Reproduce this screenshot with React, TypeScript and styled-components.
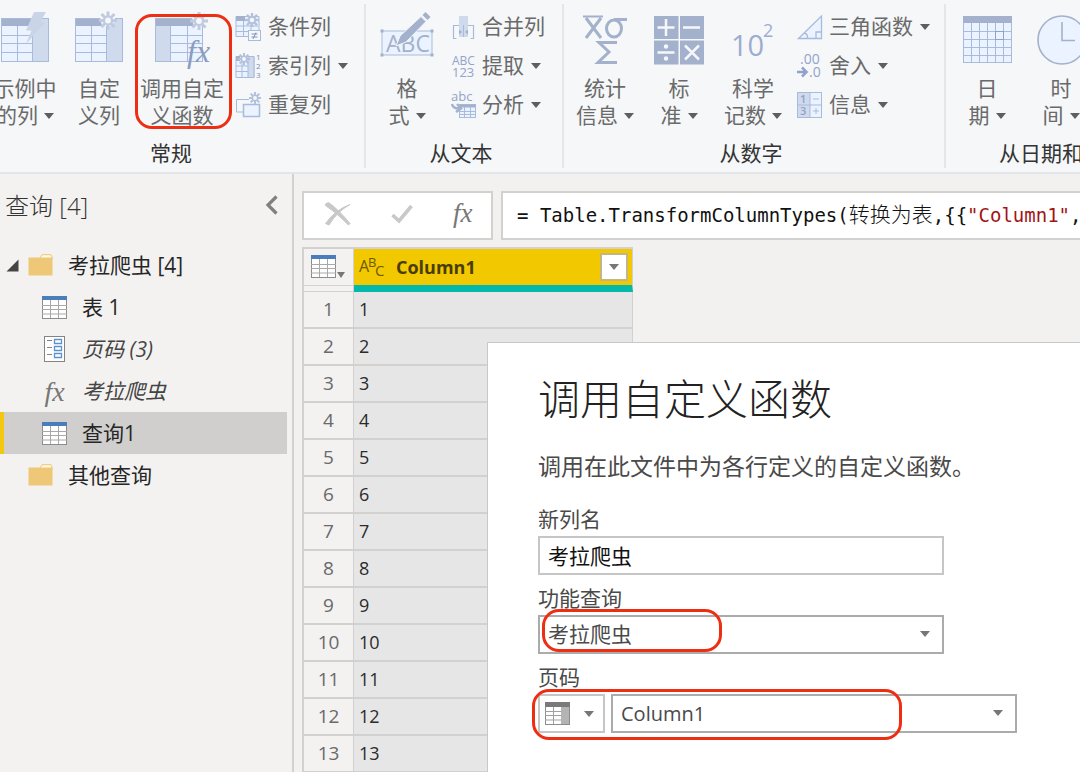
import React from "react";
import styled, { createGlobalStyle } from "styled-components";

const SANS = `"Open Sans", "Noto Sans CJK SC", sans-serif`;
const MONO = `"DejaVu Sans Mono", "Noto Sans CJK SC", monospace`;
const SERIF = `"Liberation Serif", serif`;

const GlobalStyle = createGlobalStyle`
  *, *::before, *::after { box-sizing: border-box; }
  body { margin: 0; font-family: ${SANS}; background: #f3f2f1; }
  button, input, select { font: inherit; color: inherit; border-radius: 0; margin: 0; }
  button { background: none; border: 0; padding: 0; cursor: pointer; }
`;

const Page = styled.div`
  display: flex;
  flex-direction: column;
  height: 100vh;
  overflow: hidden;
  font-size: 21px;
  line-height: 27px;
  color: #333;
`;

/* ---------- Ribbon ---------- */

const RibbonFrame = styled.header`
  flex: none;
  overflow: hidden;
  background: #f5f7f9;
  border-bottom: 2px solid #e3e6e9;
`;

const RibbonStrip = styled.div`
  display: flex;
  width: max-content;
  margin-left: -22px;
  padding: 4px 0;
`;

const Group = styled.section<{ $width: number; $start?: number }>`
  display: flex;
  flex-direction: column;
  flex: none;
  width: ${(p) => p.$width}px;
  padding-left: ${(p) => p.$start ?? 4}px;
  border-right: 2px solid #e4e6ea;
`;

const GroupBody = styled.div`
  display: flex;
  height: 135px;
`;

const GroupName = styled.h2`
  margin: 0 0 1px;
  padding-right: 10px;
  font-size: 21px;
  font-weight: 400;
  line-height: 28px;
  text-align: center;
  color: #333;
`;

const BigButton = styled.button<{ $wide?: boolean }>`
  position: relative;
  display: flex;
  flex-direction: column;
  align-items: center;
  flex: none;
  width: ${(p) => (p.$wide ? 92 : 74)}px;
  padding-top: 7px;
  color: #6a6a6a;
  white-space: nowrap;
`;

const BigIcon = styled.span`
  display: flex;
  align-items: flex-start;
  justify-content: center;
  height: 64px;
  svg { display: block; }
`;

const CaptionLine = styled.span`
  display: flex;
  align-items: center;
  gap: 6px;
  height: 27px;
`;

const SmallList = styled.div`
  display: flex;
  flex-direction: column;
  margin-left: 7px;
  padding-top: 3px;
`;

const SmallButton = styled.button`
  display: flex;
  align-items: center;
  gap: 6px;
  height: 39px;
  color: #6a6a6a;
  white-space: nowrap;
  svg { flex: none; }
`;

const SmallLabel = styled.span`
  margin-right: 1px;
`;

const Ring = styled.span<{ $inset: string }>`
  position: absolute;
  inset: ${(p) => p.$inset};
  border: 3px solid #ee2e12;
  border-radius: 17px;
  pointer-events: none;
`;

/* ---------- Query pane ---------- */

const Body = styled.div`
  display: flex;
  flex: 1;
  min-height: 0;
`;

const Pane = styled.aside`
  flex: none;
  width: 294px;
  border-right: 2px solid #d2d1d0;
  background: #f3f2f1;
`;

const PaneHeader = styled.div`
  display: flex;
  align-items: center;
  justify-content: space-between;
  height: 62px;
  padding: 0 14px 0 5px;
  margin-bottom: 8px;
`;

const PaneTitle = styled.h1`
  margin: 0;
  font-size: 24px;
  font-weight: 300;
  color: #333;
`;

const CollapseButton = styled.button`
  display: flex;
`;

const Tree = styled.ul`
  margin: 0;
  padding: 0;
  list-style: none;
`;

const TreeButton = styled.button<{ $depth: number; $selected?: boolean; $italic?: boolean }>`
  display: flex;
  align-items: center;
  width: 287px;
  height: 42px;
  padding-left: ${(p) => (p.$depth ? 38 : 2)}px;
  border-left: 4px solid ${(p) => (p.$selected ? "#f2c811" : "transparent")};
  background: ${(p) => (p.$selected ? "#d0cfce" : "transparent")};
  font-style: ${(p) => (p.$italic ? "italic" : "normal")};
  color: ${(p) => (p.$italic ? "#444" : "#262626")};
  text-align: left;
`;

const Twisty = styled.span`
  display: flex;
  width: 22px;
`;

const TreeIcon = styled.span`
  display: flex;
  align-items: center;
  justify-content: center;
  width: 25px;
  margin-right: 15px;
`;

const Fx = styled.span<{ $size: number }>`
  font-family: ${SERIF};
  font-size: ${(p) => p.$size}px;
  font-style: italic;
  line-height: 27px;
  color: #777;
`;

/* ---------- Workspace ---------- */

const Workspace = styled.main`
  position: relative;
  flex: 1;
  min-width: 0;
  padding: 17px 0 0 8px;
  overflow: hidden;
  background: #f2f1f0;
`;

const FormulaRow = styled.div`
  display: flex;
  gap: 8px;
  height: 49px;
  margin-bottom: 7px;
`;

const FormulaActions = styled.div`
  display: flex;
  align-items: center;
  gap: 40px;
  flex: none;
  width: 191px;
  padding: 0 0 4px 21px;
  border: 2px solid #d2d1d0;
  background: #fff;
`;

const ActionButton = styled.button`
  display: flex;
  align-items: center;
  justify-content: center;
  height: 36px;
`;

const Formula = styled.code`
  flex: 1;
  min-width: 0;
  padding: 0 14px;
  border: 2px solid #d2d1d0;
  border-right: 0;
  overflow: hidden;
  background: #fff;
  font-family: ${MONO};
  font-size: 19px;
  line-height: 44px;
  white-space: pre;
  color: #111;
`;

const FormulaName = styled.span`
  font-size: 21px;
  font-weight: 300;
`;

const FormulaString = styled.span`
  color: #a31515;
`;

const Grid = styled.table`
  width: 331px;
  border-collapse: separate;
  border-spacing: 0;
  table-layout: fixed;
  border-top: 2px solid #d2d1d0;
  border-left: 2px solid #d2d1d0;
`;

const CornerCell = styled.th`
  width: 50px;
  height: 43px;
  padding: 0;
  border-right: 1px solid #d2d1d0;
  border-bottom: 1px solid #d2d1d0;
  background: #f3f2f1;
`;

const CornerButton = styled.button`
  display: flex;
  align-items: flex-end;
  gap: 1px;
  width: 100%;
  height: 36px;
  padding: 0 0 7px 7px;
  margin-bottom: 4px;
  border-bottom: 1px solid #d2d1d0;
`;

const ColumnCell = styled.th`
  height: 43px;
  padding: 0;
  border-right: 1px solid #d2d1d0;
  border-bottom: 7px solid #01b8aa;
  background: #f2c800;
  font-weight: 400;
`;

const ColumnHead = styled.div`
  display: flex;
  align-items: center;
  height: 36px;
  padding: 0 4px 0 5px;
`;

const ColumnName = styled.span`
  flex: 1;
  margin-left: 11px;
  font-size: 18px;
  font-weight: 700;
  text-align: left;
  color: #4a3d00;
`;

const FilterButton = styled.button`
  display: flex;
  align-items: center;
  justify-content: center;
  width: 28px;
  height: 28px;
  border: 2px solid #c4b682;
  background: #fff;
`;

const RowNumber = styled.th`
  height: 37px;
  padding: 0;
  border-right: 1px solid #d2d1d0;
  border-bottom: 2px solid #d2d1d0;
  background: #f3f2f1;
  font-size: 19px;
  font-weight: 400;
  text-align: center;
  color: #6a6a6a;
`;

const ValueCell = styled.td`
  height: 37px;
  padding: 0 0 0 5px;
  border-right: 1px solid #d2d1d0;
  border-bottom: 2px solid #d2d1d0;
  background: #e6e6e6;
  font-size: 18px;
  font-weight: 500;
  color: #2b2b2b;
`;

/* ---------- Dialog ---------- */

const Dialog = styled.section`
  position: absolute;
  top: 168px;
  right: 0;
  bottom: 0;
  left: 193px;
  padding: 28px 50px;
  border-top: 1px solid #c8c8c8;
  border-left: 1px solid #c8c8c8;
  background: #fff;
  color: #4a4a4a;
`;

const DialogTitle = styled.h2`
  margin: 0;
  font-size: 42px;
  font-weight: 300;
  line-height: 56px;
  white-space: nowrap;
  color: #222;
`;

const DialogText = styled.p`
  margin: 23px 0 24px;
  font-size: 23px;
  line-height: 32px;
  white-space: nowrap;
`;

const Field = styled.div`
  margin-bottom: 10px;
`;

const FieldLabel = styled.label`
  display: block;
  height: 30px;
`;

const ControlRow = styled.div`
  position: relative;
  display: flex;
  gap: 6px;
`;

const TextInput = styled.input`
  width: 406px;
  height: 39px;
  padding: 0 8px 2px;
  border: 2px solid #c6c6c6;
  background: #fff;
  color: #111;
  outline: 0;
`;

const SelectFrame = styled.div`
  position: relative;
  width: 406px;
  height: 39px;
  svg { position: absolute; right: 14px; top: 16px; pointer-events: none; }
`;

const Select = styled.select<{ $latin?: boolean }>`
  appearance: none;
  width: 100%;
  height: 100%;
  padding: 0 32px 0 8px;
  border: 2px solid #ababab;
  background: #fff;
  font-size: ${(p) => (p.$latin ? 20 : 21)}px;
  color: #4a4a4a;
`;

const TypePicker = styled.button`
  display: flex;
  align-items: center;
  justify-content: space-between;
  width: 67px;
  height: 39px;
  padding: 0 9px 0 5px;
  border: 2px solid #c6c6c6;
`;

const RingSpan = styled.span<{ $width: number }>`
  display: block;
  width: ${(p) => p.$width}px;
`;

/* ---------- Icons ---------- */

const LINE = "#a9bbdc";
const HEAD = "#a3b1cc";
const CELL = "#eaf3ff";
const SIDE = "#cfdaec";

const Caret = ({ color = "#5e5e5e", w = 10 }: { color?: string; w?: number }) => (
  <svg width={w} height={6} viewBox="0 0 10 6" preserveAspectRatio="none">
    <path d="M0 0h10L5 6z" fill={color} />
  </svg>
);

const Spark = ({ x, y, r, color = "#c0cbe0" }: { x: number; y: number; r: number; color?: string }) => (
  <g transform={`translate(${x} ${y}) scale(${r / 9})`} stroke={color} strokeWidth="3" fill="none">
    <path d="M0 -9V-4M0 9V4M-9 0H-4M9 0H4M-6.500 -6.500L-3 -3M6.500 6.500L3 3M-6.500 6.500L-3 3M6.500 -6.500L3 -3" />
    <circle r="4" fill="#f5f7f9" strokeWidth="2.2" />
  </g>
);

const BigTable = ({ side }: { side: "left" | "right" }) => {
  const sx = side === "left" ? 1 : 33;
  const cx = side === "left" ? 17 : 1;
  return (
    <g>
      <rect x="1" y="7" width="48" height="43" fill={CELL} />
      <rect x={sx} y="7" width="16" height="43" fill={SIDE} />
      <path d={`M${cx} 24.500h32M${cx} 32.500h32M${cx} 41.500h32M${cx + 16}.500 15v35`} stroke={LINE} fill="none" />
      {side === "right" && <rect x="33" y="15" width="16" height="35" fill={SIDE} />}
      <path d={side === "left" ? "M16.500 15v35" : "M32.500 15v35"} stroke={LINE} fill="none" />
      <rect x="1" y="7" width={side === "left" ? 48 : 32} height="8" fill={HEAD} />
      <rect x="1.500" y="7.500" width="47" height="43" fill="none" stroke={LINE} />
    </g>
  );
};

const ExampleColumnIcon = () => (
  <svg width="50" height="54" viewBox="0 0 50 54">
    <BigTable side="right" />
    <path d="M34 1H46L40 11.500H45L26 33L31.500 19.500H26z" fill="#c9d4e6" />
  </svg>
);

const CustomColumnIcon = () => (
  <svg width="50" height="54" viewBox="0 0 50 54">
    <BigTable side="right" />
    <path d="M26 6h15v4l-5 5h-8z" fill="#f5f7f9" />
    <Spark x={34} y={9.5} r={9} />
  </svg>
);

const InvokeIcon = () => (
  <svg width="56" height="60" viewBox="0 0 56 60">
    <BigTable side="left" />
    <path d="M38 6h12v6l-5 5h-5z" fill="#f5f7f9" />
    <Spark x={45} y={10} r={9} />
    <text x="33" y="51" fontFamily={SERIF} fontStyle="italic" fontSize="32" fill="#8c9cc0">fx</text>
  </svg>
);

const ConditionalIcon = () => (
  <svg width="27" height="28" viewBox="0 0 27 28">
    <path d="M1 3.500h23v20H1z" fill={CELL} stroke={LINE} />
    <path d="M1 3h9v5H1z" fill={HEAD} />
    <path d="M1 13h22M1 18.500h22M8.500 8v15M16 8v15" stroke={LINE} />
    <Spark x={17} y={7} r={7} color="#b3c1dc" />
    <rect x="13.500" y="17.500" width="12" height="10" fill="#f5f7f9" stroke={LINE} />
    <path d="M16.500 21h6M16.500 24h6M21 19.500l-3 6.500" stroke="#7f92bd" />
  </svg>
);

const IndexIcon = () => (
  <svg width="27" height="28" viewBox="0 0 27 28">
    <path d="M1 4.500h18v21H1z" fill={CELL} stroke={LINE} />
    <path d="M13 4.500h6v21h-6z" fill={SIDE} stroke={LINE} />
    <path d="M1 4h4v5H1z" fill={HEAD} />
    <path d="M1 14h12M1 19.500h12M7 10v15" stroke={LINE} />
    <Spark x={9} y={7} r={6} color="#b3c1dc" />
    <g fontFamily={SANS} fontSize="8" fill="#7c8db8">
      <text x="21" y="8">1</text>
      <text x="21" y="17">2</text>
      <text x="21" y="26">3</text>
    </g>
  </svg>
);

const DuplicateIcon = () => (
  <svg width="27" height="28" viewBox="0 0 27 28">
    <path d="M8 21H1.500V8.500H14" fill="none" stroke={LINE} />
    <rect x="8.500" y="13.500" width="16" height="12" fill={CELL} stroke={LINE} strokeWidth="1.500" />
    <Spark x={20} y={7} r={6} color="#b3c1dc" />
  </svg>
);

const FormatIcon = () => (
  <svg width="54" height="54" viewBox="0 0 54 54">
    <rect x="2" y="20" width="50" height="24" fill={CELL} stroke={LINE} />
    <g fill={HEAD}>
      <path d="M0.500 18.500h3v3h-3zM50.500 18.500h3v3h-3zM0.500 42.500h3v3h-3zM50.500 42.500h3v3h-3z" />
    </g>
    <text x="6" y="41" fontFamily={SANS} fontSize="23" fill={HEAD}>ABC</text>
    <path d="M16 35L20 25L41 5.500L46 10.500L26 31z" fill={HEAD} stroke="#f5f7f9" />
    <path d="M42.500 4L45.500 1L50.500 6L47.500 9z" fill={HEAD} />
  </svg>
);

const MergeIcon = () => (
  <svg width="25" height="28" viewBox="0 0 25 28">
    <path d="M2.500 26V12.500H22.500V26M2.500 25.500h3M19.500 25.500h3" fill="none" stroke={LINE} strokeWidth="1.200" />
    <rect x="8" y="3" width="9" height="21" fill={SIDE} />
    <path d="M12.500 12v12" stroke={LINE} />
    <path d="M8 16.500l3 2.500L8 21.500zM17 16.500L14 19L17 21.500z" fill={HEAD} />
  </svg>
);

const ExtractIcon = () => (
  <svg width="25" height="28" viewBox="0 0 25 28">
    <g fontFamily={SANS} fontWeight="500" fill="#93a4ca">
      <text x="1" y="13" fontSize="12">ABC</text>
      <text x="1" y="25" fontSize="13">123</text>
    </g>
  </svg>
);

const ParseIcon = () => (
  <svg width="25" height="28" viewBox="0 0 25 28">
    <text x="0" y="10" fontFamily={SANS} fontSize="13" fontWeight="500" fill="#93a4ca">abc</text>
    <rect x="8.500" y="13.500" width="16" height="13" fill={CELL} stroke={LINE} />
    <path d="M8.500 15h16" stroke={HEAD} strokeWidth="3" />
    <path d="M8 20.500h16M8 23.500h16M13.500 16v10M19.500 16v10" stroke={LINE} />
    <path d="M1 13q1 5 8 4.500M6 13l4 4.500L5 21" fill="none" stroke={HEAD} strokeWidth="2.400" />
  </svg>
);

const StatsIcon = () => (
  <svg width="46" height="54" viewBox="0 0 46 54">
    <g fill="none" stroke={HEAD} strokeWidth="3">
      <path d="M1 5.500H21" strokeWidth="2" />
      <path d="M4 7L19 27M19 7L4 27" />
      <ellipse cx="32" cy="17.500" rx="7.500" ry="8.500" />
      <path d="M32 8.500H45" />
      <path d="M35 31.500H17L27 41L16 51.500H35" />
    </g>
  </svg>
);

const StandardIcon = () => (
  <svg width="50" height="54" viewBox="0 0 50 54">
    <path d="M0 5h24.500v23H0zM26 5h24v23H26zM0 29.500h24.500v24H0zM26 29.500h24v24H26z" fill={HEAD} />
    <path d="M12 8v17M3.500 16.500h17M29 16.500h17M3.500 41.500h17M31 34.500l14 14M45 34.500l-14 14" stroke="#f5f7f9" strokeWidth="2.500" />
    <circle cx="12" cy="35.500" r="2.200" fill="#f5f7f9" />
    <circle cx="12" cy="47.500" r="2.200" fill="#f5f7f9" />
  </svg>
);

const ScientificIcon = () => (
  <svg width="44" height="54" viewBox="0 0 44 54">
    <g fontFamily={SANS} fontWeight="500" fill="#9dacd0">
      <text x="0" y="45" fontSize="29">10</text>
      <text x="32" y="26" fontSize="18">2</text>
    </g>
  </svg>
);

const TrigIcon = () => (
  <svg width="26" height="28" viewBox="0 0 26 28">
    <path d="M1.500 25.500L24.500 3V25.500z" fill={CELL} stroke={LINE} strokeWidth="1.300" />
    <path d="M24 19h-5v6M7 20q4 1 3.500 5" fill="none" stroke={LINE} strokeWidth="1.300" />
  </svg>
);

const RoundIcon = () => (
  <svg width="26" height="28" viewBox="0 0 26 28">
    <g fontFamily={SANS} fontSize="14" fill="#93a4ca">
      <text x="3" y="12">.00</text>
      <text x="12" y="25">.0</text>
    </g>
    <path d="M0 20h8M5 15.500l4.500 4.500L5 24.500" fill="none" stroke="#8fa2cb" strokeWidth="2.500" />
  </svg>
);

const InfoIcon = () => (
  <svg width="26" height="28" viewBox="0 0 26 28">
    <rect x="0.500" y="1.500" width="24" height="25" fill={CELL} stroke={LINE} />
    <rect x="1" y="2" width="12" height="24" fill={SIDE} />
    <path d="M0 14h25M13 2v25M16 8h6M16 20h6M19 17v6" stroke={LINE} fill="none" />
    <g fontFamily={SANS} fontSize="11" fontWeight="600" fill="#8fa2cb">
      <text x="3" y="12">1</text>
      <text x="3" y="24">3</text>
    </g>
  </svg>
);

const CalendarIcon = () => (
  <svg width="50" height="54" viewBox="0 0 50 54">
    <rect x="1.500" y="5.500" width="48" height="46" fill={CELL} stroke={LINE} />
    <rect x="1" y="5" width="49" height="7" fill={HEAD} />
    <path d="M1 20.500h48M1 28.500h48M1 36.500h48M1 44.500h48M9.500 12v39M17.500 12v39M25.500 12v39M33.500 12v39M41.500 12v39" stroke={LINE} />
    <rect x="33.500" y="20.500" width="8" height="8" fill="none" stroke="#8fa2cb" />
  </svg>
);

const ClockIcon = () => (
  <svg width="50" height="54" viewBox="0 0 50 54">
    <circle cx="26" cy="29" r="24" fill={CELL} stroke={HEAD} strokeWidth="1.600" />
    <path d="M26 11v18.500H39" fill="none" stroke={HEAD} strokeWidth="1.600" />
  </svg>
);

const TableIcon = () => (
  <svg width="25" height="23" viewBox="0 0 25 23">
    <rect x="0.500" y="0.500" width="24" height="22" fill="#fff" stroke="#8c8c8c" />
    <path d="M0 9.500h25M0 13.500h25M0 18h25M8.500 4v18M16.500 4v18" stroke="#a8a8a8" />
    <rect x="0" y="0" width="25" height="4" fill="#4a7ebb" />
  </svg>
);

const FolderIcon = () => (
  <svg width="25" height="22" viewBox="0 0 25 22">
    <path d="M12 4L14 0.700H23L24 3V6H12z" fill="#fff8e6" stroke="#ecc878" />
    <path d="M0.500 3.500H24.500V21.500H0.500z" fill="#eec876" />
  </svg>
);

const ParameterIcon = () => (
  <svg width="21" height="26" viewBox="0 0 21 26">
    <rect x="0.500" y="0.500" width="20" height="25" fill="#fff" stroke="#848484" />
    <path d="M3 4.500h5M3 11.500h5M3 18.500h5" stroke="#848484" />
    <path d="M10.500 3.500h7v4h-7zM10.500 10.500h7v4h-7zM10.500 17.500h7v4h-7z" fill="#fff" stroke="#5b93cf" strokeWidth="1.300" />
  </svg>
);

const TwistyIcon = () => (
  <svg width="13" height="13" viewBox="0 0 13 13">
    <path d="M12.500 0.500V12.500H0.500z" fill="#444" />
  </svg>
);

const ChevronIcon = () => (
  <svg width="13" height="20" viewBox="0 0 13 20">
    <path d="M11.500 1.500L3 10L11.500 18.500" fill="none" stroke="#808080" strokeWidth="3.200" />
  </svg>
);

const CancelIcon = () => (
  <svg width="26" height="24" viewBox="0 0 26 24">
    <path d="M0.500 2L3.500 0.500Q13 7 25 21.500L23.500 23Q12 11 0.500 3.500z" fill="#c8c8c8" stroke="#c8c8c8" />
    <path d="M25 2.500Q12 9.500 4 23L0.500 21.500Q10 8 25 2.500z" fill="#c8c8c8" stroke="#c8c8c8" />
  </svg>
);

const CheckIcon = () => (
  <svg width="22" height="20" viewBox="0 0 22 20">
    <path d="M1.500 11L8 17L20.500 2" fill="none" stroke="#c8c8c8" strokeWidth="3.600" />
  </svg>
);

const TextTypeIcon = () => (
  <svg width="26" height="26" viewBox="0 0 26 26">
    <g fontFamily={SANS} fill="#6e5a00">
      <text x="0" y="18" fontSize="16">A</text>
      <text x="9" y="13" fontSize="13">B</text>
      <text x="16" y="22" fontSize="15">C</text>
    </g>
  </svg>
);

const ColumnIcon = () => (
  <svg width="26" height="24" viewBox="0 0 26 24">
    <rect x="0.500" y="0.500" width="24" height="22" fill="#fff" stroke="#8c8c8c" />
    <rect x="16" y="4" width="8" height="18" fill="#b4b4b4" />
    <path d="M0 9.500h16M0 13.500h16M0 18h16M8.500 4v18" stroke="#a0a0a0" />
    <rect x="0" y="0" width="25" height="5" fill="#7a7a7a" />
  </svg>
);

/* ---------- Composition ---------- */

type BigProps = {
  icon: React.ReactNode;
  lines: [string, string];
  menu?: boolean;
  wide?: boolean;
  ringed?: boolean;
};

const BigCommand = ({ icon, lines, menu, wide, ringed }: BigProps) => (
  <BigButton $wide={wide}>
    <BigIcon>{icon}</BigIcon>
    <CaptionLine>{lines[0]}</CaptionLine>
    <CaptionLine>
      {lines[1]}
      {menu && <Caret />}
    </CaptionLine>
    {ringed && <Ring $inset="10px -4px 10px -1px" />}
  </BigButton>
);

const SmallCommand = ({ icon, label, menu }: { icon: React.ReactNode; label: string; menu?: boolean }) => (
  <SmallButton>
    {icon}
    <SmallLabel>{label}</SmallLabel>
    {menu && <Caret />}
  </SmallButton>
);

const Ribbon = () => (
  <RibbonFrame>
    <RibbonStrip>
      <Group $width={388} $start={10}>
        <GroupBody>
          <BigCommand icon={<ExampleColumnIcon />} lines={["示例中", "的列"]} menu />
          <BigCommand icon={<CustomColumnIcon />} lines={["自定", "义列"]} />
          <BigCommand icon={<InvokeIcon />} lines={["调用自定", "义函数"]} wide ringed />
          <SmallList>
            <SmallCommand icon={<ConditionalIcon />} label="条件列" />
            <SmallCommand icon={<IndexIcon />} label="索引列" menu />
            <SmallCommand icon={<DuplicateIcon />} label="重复列" />
          </SmallList>
        </GroupBody>
        <GroupName>常规</GroupName>
      </Group>
      <Group $width={198}>
        <GroupBody>
          <BigCommand icon={<FormatIcon />} lines={["格", "式"]} menu />
          <SmallList>
            <SmallCommand icon={<MergeIcon />} label="合并列" />
            <SmallCommand icon={<ExtractIcon />} label="提取" menu />
            <SmallCommand icon={<ParseIcon />} label="分析" menu />
          </SmallList>
        </GroupBody>
        <GroupName>从文本</GroupName>
      </Group>
      <Group $width={382}>
        <GroupBody>
          <BigCommand icon={<StatsIcon />} lines={["统计", "信息"]} menu />
          <BigCommand icon={<StandardIcon />} lines={["标", "准"]} menu />
          <BigCommand icon={<ScientificIcon />} lines={["科学", "记数"]} menu />
          <SmallList>
            <SmallCommand icon={<TrigIcon />} label="三角函数" menu />
            <SmallCommand icon={<RoundIcon />} label="舍入" menu />
            <SmallCommand icon={<InfoIcon />} label="信息" menu />
          </SmallList>
        </GroupBody>
        <GroupName>从数字</GroupName>
      </Group>
      <Group $width={240}>
        <GroupBody>
          <BigCommand icon={<CalendarIcon />} lines={["日", "期"]} menu />
          <BigCommand icon={<ClockIcon />} lines={["时", "间"]} menu />
        </GroupBody>
        <GroupName>从日期和时间</GroupName>
      </Group>
    </RibbonStrip>
  </RibbonFrame>
);

const queries = [
  { name: "表 1", icon: <TableIcon /> },
  { name: "页码 (3)", icon: <ParameterIcon />, italic: true },
  { name: "考拉爬虫", icon: <Fx $size={28}>fx</Fx>, italic: true },
  { name: "查询1", icon: <TableIcon />, selected: true },
];

const QueryPane = () => (
  <Pane>
    <PaneHeader>
      <PaneTitle>查询 [4]</PaneTitle>
      <CollapseButton aria-label="折叠"><ChevronIcon /></CollapseButton>
    </PaneHeader>
    <Tree>
      <li>
        <TreeButton $depth={0}>
          <Twisty><TwistyIcon /></Twisty>
          <TreeIcon><FolderIcon /></TreeIcon>
          考拉爬虫 [4]
        </TreeButton>
      </li>
      {queries.map((q) => (
        <li key={q.name}>
          <TreeButton $depth={1} $selected={q.selected} $italic={q.italic}>
            <TreeIcon>{q.icon}</TreeIcon>
            {q.name}
          </TreeButton>
        </li>
      ))}
      <li>
        <TreeButton $depth={0}>
          <Twisty />
          <TreeIcon><FolderIcon /></TreeIcon>
          其他查询
        </TreeButton>
      </li>
    </Tree>
  </Pane>
);

const rows = Array.from({ length: 13 }, (_, i) => i + 1);

const DataGrid = () => (
  <Grid>
    <thead>
      <tr>
        <CornerCell>
          <CornerButton aria-label="表选项">
            <TableIcon />
            <Caret color="#777" w={8} />
          </CornerButton>
        </CornerCell>
        <ColumnCell>
          <ColumnHead>
            <TextTypeIcon />
            <ColumnName>Column1</ColumnName>
            <FilterButton aria-label="筛选"><Caret color="#777" /></FilterButton>
          </ColumnHead>
        </ColumnCell>
      </tr>
    </thead>
    <tbody>
      {rows.map((n) => (
        <tr key={n}>
          <RowNumber scope="row">{n}</RowNumber>
          <ValueCell>{n}</ValueCell>
        </tr>
      ))}
    </tbody>
  </Grid>
);

const InvokeDialog = () => (
  <Dialog role="dialog" aria-labelledby="dialog-title">
    <DialogTitle id="dialog-title">调用自定义函数</DialogTitle>
    <DialogText>调用在此文件中为各行定义的自定义函数。</DialogText>
    <Field>
      <FieldLabel htmlFor="new-column">新列名</FieldLabel>
      <ControlRow>
        <TextInput id="new-column" defaultValue="考拉爬虫" />
      </ControlRow>
    </Field>
    <Field>
      <FieldLabel htmlFor="function-query">功能查询</FieldLabel>
      <ControlRow>
        <SelectFrame>
          <Select id="function-query" defaultValue="考拉爬虫">
            <option>考拉爬虫</option>
          </Select>
          <Caret color="#777" />
        </SelectFrame>
        <Ring $inset="-6px auto 2px 4px"><RingSpan $width={174} /></Ring>
      </ControlRow>
    </Field>
    <Field>
      <FieldLabel htmlFor="page-number">页码</FieldLabel>
      <ControlRow>
        <TypePicker aria-label="列类型">
          <ColumnIcon />
          <Caret color="#777" />
        </TypePicker>
        <SelectFrame>
          <Select id="page-number" defaultValue="Column1" $latin>
            <option>Column1</option>
          </Select>
          <Caret color="#777" />
        </SelectFrame>
        <Ring $inset="-5px auto -7px -6px"><RingSpan $width={364} /></Ring>
      </ControlRow>
    </Field>
  </Dialog>
);

export default function App() {
  return (
    <Page>
      <GlobalStyle />
      <Ribbon />
      <Body>
        <QueryPane />
        <Workspace>
          <FormulaRow>
            <FormulaActions>
              <ActionButton aria-label="取消"><CancelIcon /></ActionButton>
              <ActionButton aria-label="确认"><CheckIcon /></ActionButton>
              <ActionButton><Fx $size={27}>fx</Fx></ActionButton>
            </FormulaActions>
            <Formula>
              = Table.TransformColumnTypes(<FormulaName>转换为表</FormulaName>,{"{{"}
              <FormulaString>"Column1"</FormulaString>,
            </Formula>
          </FormulaRow>
          <DataGrid />
          <InvokeDialog />
        </Workspace>
      </Body>
    </Page>
  );
}
